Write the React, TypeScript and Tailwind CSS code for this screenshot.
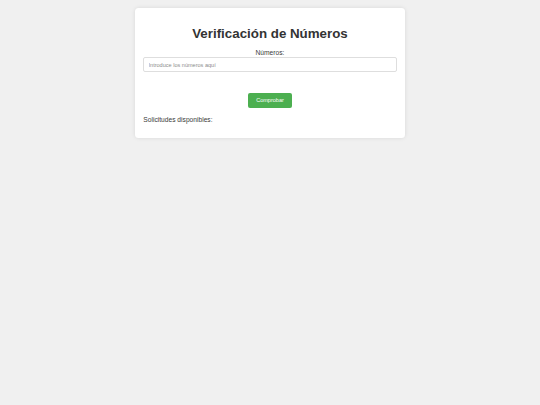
import React from "react";

export default function App() {
  return (
    <div className="min-h-[405px] w-full bg-[#f0f0f0] pt-[8.33px] font-['Liberation_Sans',Arial,sans-serif] text-[#333]">
      <div className="mx-auto flex w-1/2 flex-col rounded-[3.5px] bg-white px-[8.33px] pt-[8.33px] pb-[13.5px] shadow-[0_0_4px_rgba(0,0,0,0.1)]">
        <h1 className="mt-[8.9px] mb-[8px] text-center text-[13.33px] font-bold leading-[15.33px]">
          Verificación de Números
        </h1>
        <label className="block text-center text-[6.67px] leading-[7.66px] text-[#3a3a3a]">Números:</label>
        <input
          type="text"
          placeholder="Introduce los números aquí"
          className="mt-[0.4px] h-[15.5px] w-full rounded-[2px] border border-[#dedede] px-[4.2px] text-[5.56px] outline-none placeholder:text-[#8c8c8c]"
        />
        <button className="mt-[20.5px] h-[15px] self-center rounded-[2px] bg-[#4caf50] px-[8.33px] text-[5.56px] leading-[6.4px] text-white">
          Comprobar
        </button>
        <div className="mt-[8.5px] text-[6.67px] leading-[7.66px] text-[#3a3a3a]">Solicitudes disponibles:</div>
      </div>
    </div>
  );
}
